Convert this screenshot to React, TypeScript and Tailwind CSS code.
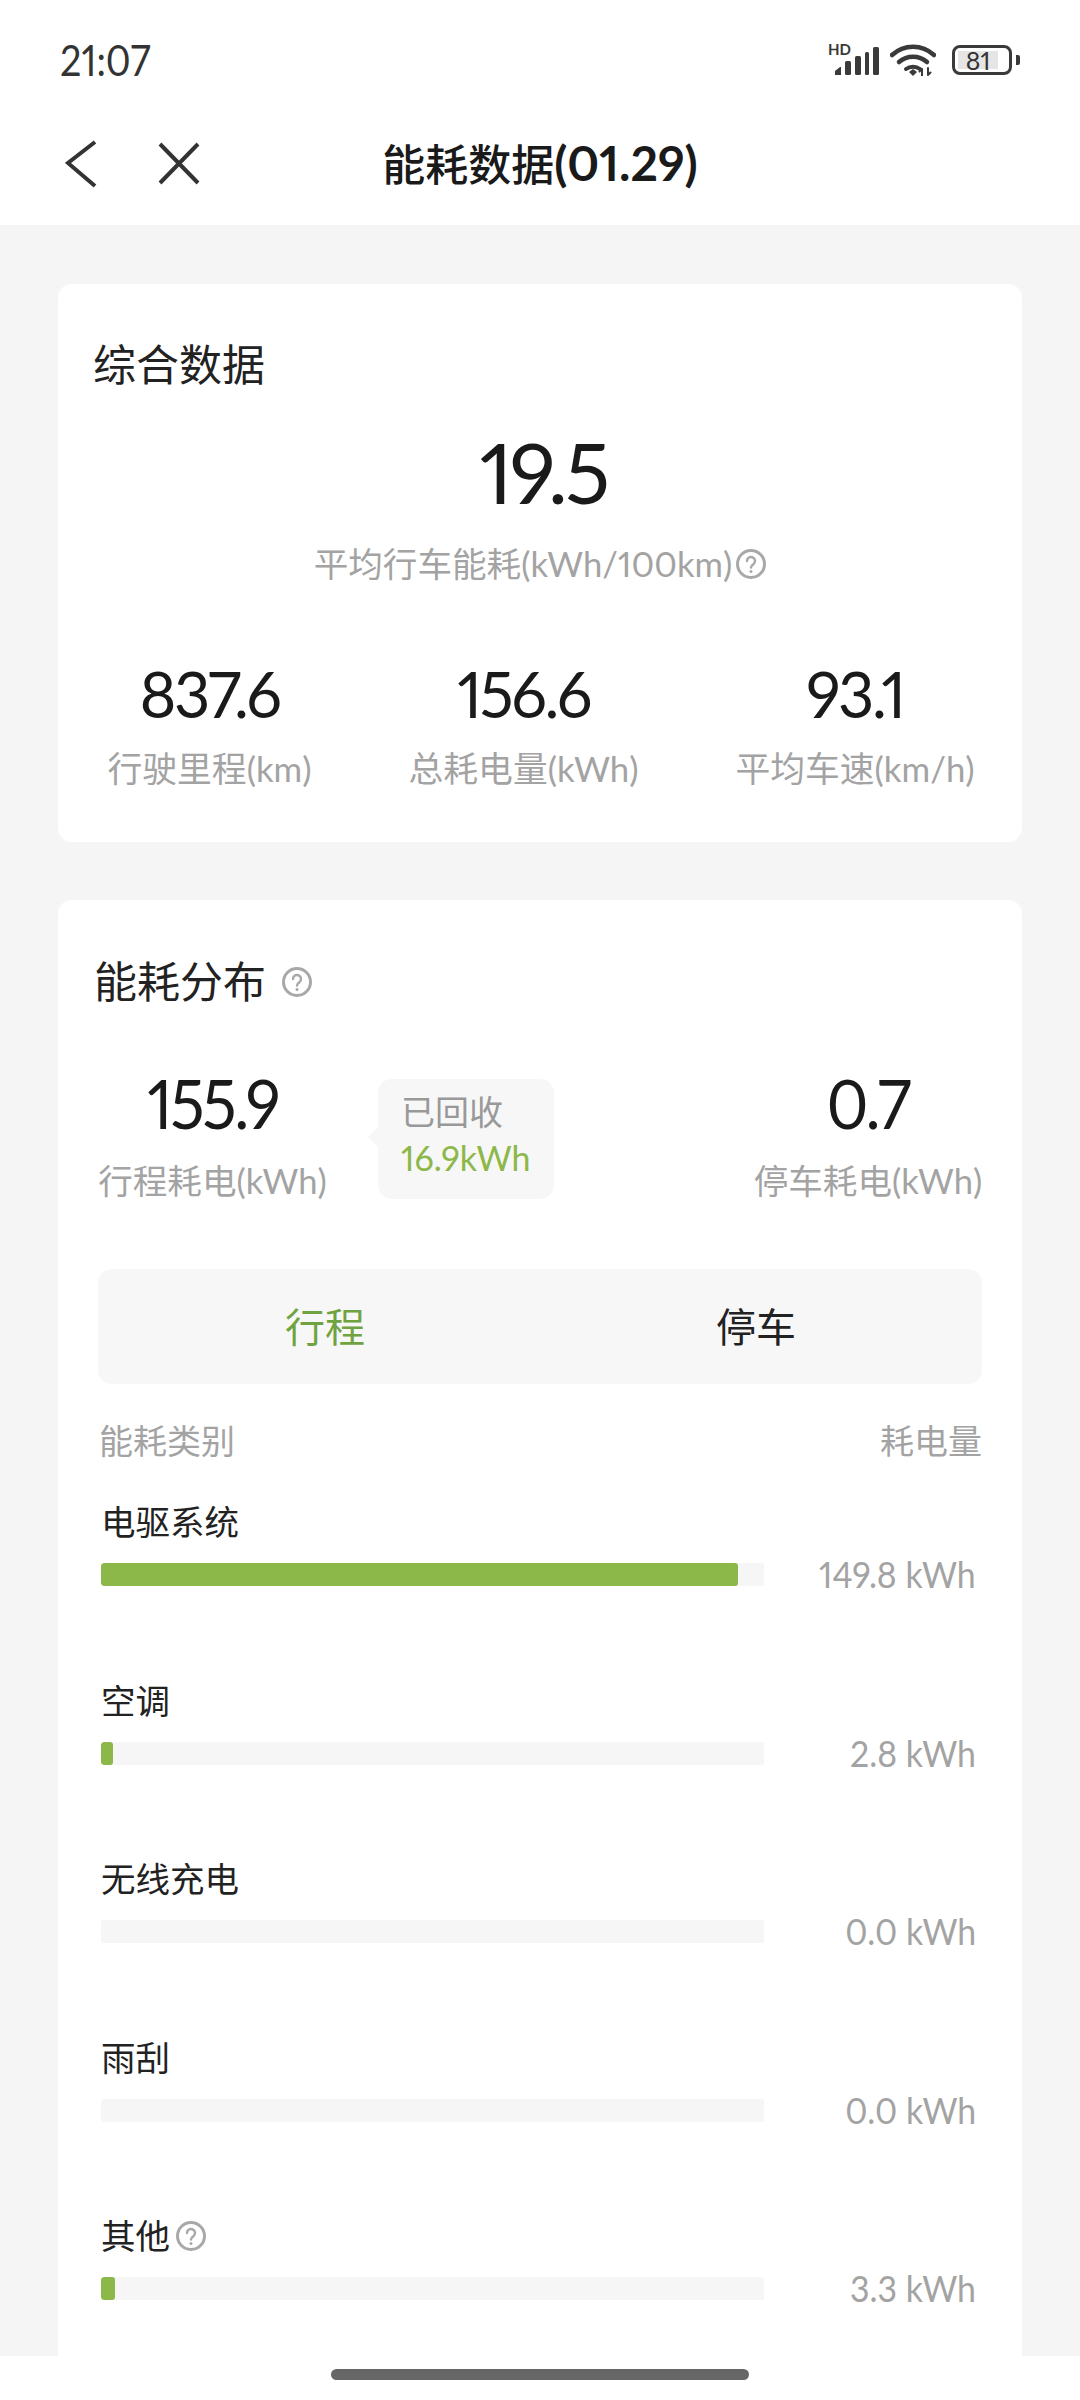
import React from "react";

const font = { fontFamily: '"Lato", "Noto Sans CJK SC", sans-serif' };

interface Row {
  name: string;
  value: string;
  percent: number;
  help?: boolean;
}

const rows: Row[] = [
  { name: "电驱系统", value: "149.8 kWh", percent: 96.1 },
  { name: "空调", value: "2.8 kWh", percent: 1.8 },
  { name: "无线充电", value: "0.0 kWh", percent: 0 },
  { name: "雨刮", value: "0.0 kWh", percent: 0 },
  { name: "其他", value: "3.3 kWh", percent: 2.1, help: true },
];

const stats = [
  { value: "837.6", label: "行驶里程(km)", width: "w-[205px]" },
  { value: "156.6", label: "总耗电量(kWh)", width: "w-[227px]" },
  { value: "93.1", label: "平均车速(km/h)", width: "w-[240px]" },
];

const HelpIcon = ({ className }: { className: string }) => (
  <svg viewBox="0 0 30 30" className={className} fill="none" stroke="#a8a8a8">
    <circle cx="15" cy="15" r="13.500" strokeWidth="3" />
    <path d="M11 12a4 4 0 1 1 6.400 3.200c-1.400 1-2.400 1.700-2.400 3.300" strokeWidth="2.400" strokeLinecap="round" />
    <circle cx="15" cy="22.500" r="1.500" fill="#a8a8a8" stroke="none" />
  </svg>
);

const StatusIcons = () => (
  <div className="flex items-center">
    <div className="relative w-[50px] h-[32px]">
      <span className="absolute left-0 top-[-2px] text-[15px] leading-[15px] font-bold text-[#3a3a3a]">HD</span>
      <svg viewBox="0 0 44 28" className="absolute left-[7px] top-[3px] w-[44px] h-[28px]" fill="#3a3a3a">
        <path d="M0 28v-4l5-4h1v8z" />
        <rect x="10" y="14" width="6" height="14" rx="1.500" />
        <rect x="20" y="9" width="6" height="19" rx="1.500" />
        <rect x="30" y="5" width="4" height="23" rx="1.500" />
        <rect x="38" y="0" width="6" height="28" rx="1.500" />
      </svg>
    </div>
    <svg viewBox="0 0 46 32" className="w-[46px] h-[32px] ml-[12px]" fill="none" stroke="#3a3a3a" strokeLinecap="round">
      <path d="M2 11C14 0 32 0 44 11" strokeWidth="4.500" />
      <path d="M9 18c8-7 20-7 28 0" strokeWidth="4.500" />
      <path d="M16 25c4-3 10-3 14 0" strokeWidth="4" />
      <path d="M19 28l4-3 4 3-4 4z" fill="#3a3a3a" stroke="none" />
      <path d="M32 32v-7m-2.500 2.500l2.500-2.500M38 24v7m0 0l2.500-2.500" strokeWidth="2" />
    </svg>
    <div className="ml-[16px] w-[60px] h-[30px] rounded-[8px] border-[3px] border-[#3a3a3a] p-[3px]">
      <div className="w-[40px] h-[18px] bg-[#e5e5e5] flex items-center justify-center text-[25px] leading-[18px] text-[#333]">81</div>
    </div>
    <div className="ml-[4px] w-[4px] h-[10px] rounded-r-[2px] bg-[#3a3a3a]" />
  </div>
);

export default function App() {
  return (
    <div className="w-[1080px] h-[2400px] flex flex-col overflow-hidden bg-[#f5f5f5] proportional-nums" style={font}>
      <header className="bg-white h-[225px] shrink-0">
        <div className="h-[120px] pl-[60px] pr-[60px] flex items-center justify-between">
          <span className="text-[42px] leading-[42px] text-[#333] scale-x-[0.9] origin-left">21:07</span>
          <StatusIcons />
        </div>
        <div className="relative h-[88px] flex items-center justify-center">
          <svg viewBox="0 0 140 48" className="absolute left-[65px] top-[20px] w-[140px] h-[48px]" fill="none" stroke="#333" strokeWidth="4">
            <path d="M30 2L3 23l27 23" />
            <path d="M95 4l38 39M133 4L95 43" />
          </svg>
          <h1 className="text-[43px] leading-[50px] font-medium text-[#1a1a1a]">
            能耗数据<span className="text-[48px] font-bold">(01.29)</span>
          </h1>
        </div>
      </header>

      <main className="flex-1 min-h-0 overflow-hidden px-[58px] pt-[59px] flex flex-col gap-[58px]">
        <section className="bg-white rounded-[14px] h-[558px] shrink-0 pt-[61px]">
          <h2 className="pl-[35px] text-[43px] leading-[40px] text-[#222]">综合数据</h2>
          <div className="mt-[47px] pl-[7px] text-center text-[84px] leading-[80px] text-[#1a1a1a] tracking-[-0.035em]">19.5</div>
          <div className="mt-[32px] flex items-center justify-center text-[34.6px] leading-[40px] text-[#a3a3a3]">
            平均行车能耗(kWh/100km)
            <HelpIcon className="w-[30px] h-[30px] ml-[4px]" />
          </div>
          <div className="mt-[80px] pl-[49px] flex gap-[98px]">
            {stats.map((s) => (
              <div key={s.label} className={`${s.width} flex flex-col items-center whitespace-nowrap`}>
                <span className="text-[63px] leading-[60px] text-[#1a1a1a] tracking-[-0.04em]">{s.value}</span>
                <span className="mt-[25px] text-[34.8px] leading-[40px] text-[#a3a3a3]">{s.label}</span>
              </div>
            ))}
          </div>
        </section>

        <section className="bg-white rounded-t-[14px] h-[1456px] shrink-0 pt-[62px]">
          <div className="pl-[36px] flex items-center">
            <h2 className="text-[43px] leading-[40px] text-[#222]">能耗分布</h2>
            <HelpIcon className="w-[30px] h-[30px] ml-[16px]" />
          </div>

          <div className="mt-[66px] pl-[42px] pr-[40px] flex items-start">
            <div className="w-[225px] flex flex-col items-center whitespace-nowrap">
              <span className="text-[68px] leading-[70px] text-[#1a1a1a] tracking-[-0.04em] scale-x-[0.94]">155.9</span>
              <span className="mt-[23px] text-[34.6px] leading-[40px] text-[#a3a3a3]">行程耗电(kWh)</span>
            </div>
            <div className="relative ml-[53px] mt-[11px] w-[176px] h-[120px] bg-[#f7f7f7] rounded-[14px] pl-[23px] pt-[13px]">
              <div className="absolute left-[-7px] top-[51px] w-[14px] h-[14px] rotate-45 bg-[#f7f7f7]" />
              <div className="text-[34px] leading-[40px] text-[#999]">已回收</div>
              <div className="mt-[6px] text-[34px] leading-[40px] text-[#8cb849]">16.9kWh</div>
            </div>
            <div className="ml-auto w-[228px] flex flex-col items-center whitespace-nowrap">
              <span className="text-[68px] leading-[70px] text-[#1a1a1a] tracking-[-0.04em] scale-x-[0.94]">0.7</span>
              <span className="mt-[23px] text-[34.6px] leading-[40px] text-[#a3a3a3]">停车耗电(kWh)</span>
            </div>
          </div>

          <div className="mt-[68px] mx-[40px] h-[115px] rounded-[14px] bg-[#f7f7f8] flex items-center text-[40px] leading-[44px]">
            <div className="w-[454px] text-center text-[#6fa33f]">行程</div>
            <div className="w-[408px] text-center text-[#222]">停车</div>
          </div>

          <div className="mt-[37px] pl-[41px] pr-[40px] flex justify-between text-[34px] leading-[40px] text-[#a3a3a3]">
            <span>能耗类别</span>
            <span>耗电量</span>
          </div>

          <div className="mt-[41px] flex flex-col gap-[94.5px]">
            {rows.map((r) => (
              <div key={r.name}>
                <div className="pl-[43px] flex items-center text-[34.5px] leading-[40px] text-[#222]">
                  {r.name}
                  {r.help && <HelpIcon className="w-[30px] h-[30px] ml-[6px]" />}
                </div>
                <div className="mt-[21px] pl-[43px] pr-[46px] flex items-center justify-between">
                  <div className="w-[663px] h-[23px] rounded-[3px] bg-[#f6f6f6] overflow-hidden">
                    <div className="h-full rounded-[3px] bg-[#8bb848]" style={{ width: `${r.percent}%` }} />
                  </div>
                  <span className="text-[36px] leading-[23px] text-[#a3a3a3] scale-x-[0.94] origin-right">{r.value}</span>
                </div>
              </div>
            ))}
          </div>
        </section>
      </main>

      <footer className="bg-white h-[44px] shrink-0 flex justify-center pt-[13px]">
        <div className="w-[418px] h-[11px] rounded-full bg-[#666]" />
      </footer>
    </div>
  );
}
